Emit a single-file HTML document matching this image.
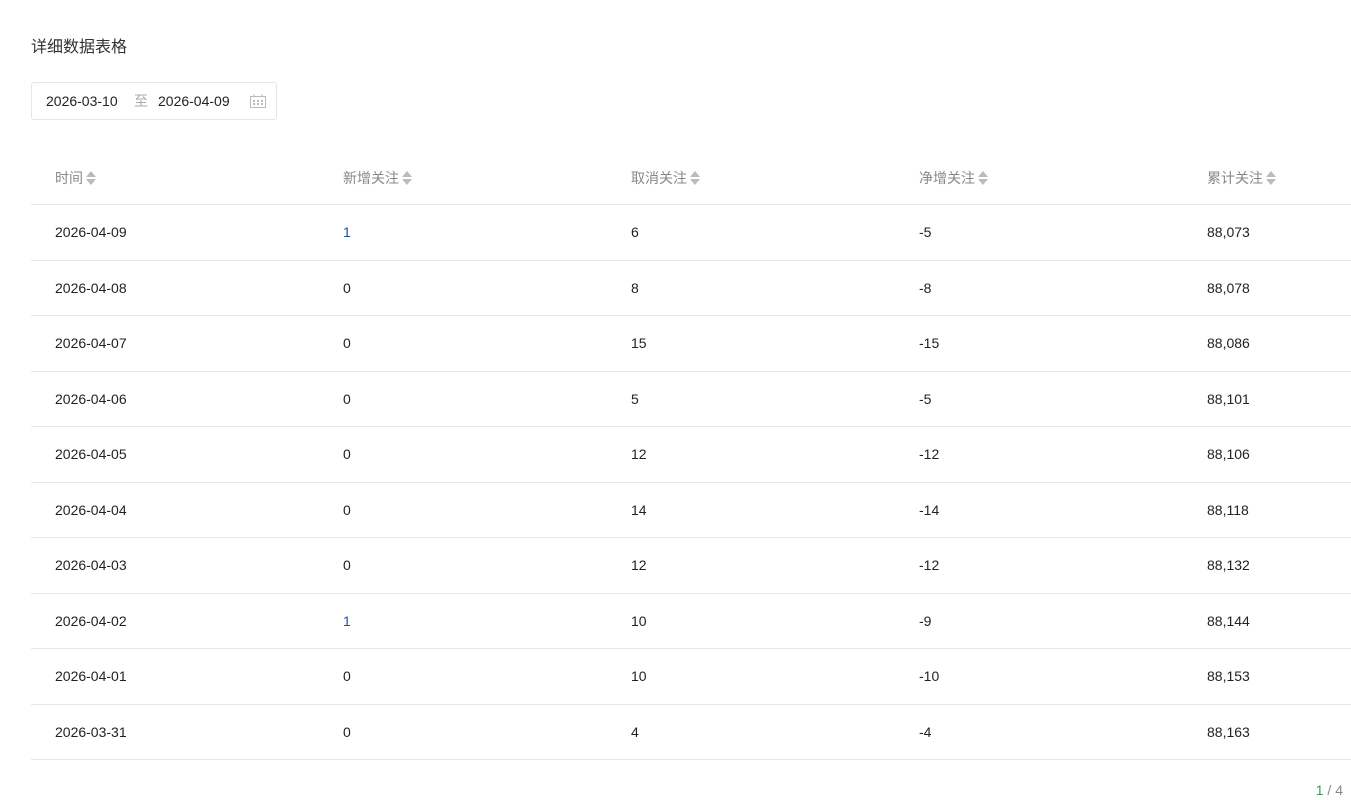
<!DOCTYPE html>
<html><head><meta charset="utf-8"><style>
*{margin:0;padding:0;box-sizing:border-box}
body{width:1351px;height:800px;background:#fff;font-family:"Liberation Sans","Noto Sans CJK SC",sans-serif;font-size:14px;color:#222;position:relative;overflow:hidden}
.title{position:absolute;left:31px;top:38px;font-size:16px;color:#333;line-height:20px}
.picker{position:absolute;left:31px;top:82px;width:246px;height:38px;border:1px solid #e4e6eb;border-radius:3px}
.picker span{position:absolute;top:9px;line-height:18px}
.tbl{position:absolute;left:31px;top:150px;width:1320px}
.row{height:55.5px;border-bottom:1px solid #e8e8e8;position:relative}
.hdr{height:55px;color:#888}
.row div{position:absolute;top:0;line-height:55px}
.hdr div{line-height:56px}
.c0{left:24px}.c1{left:312px}.c2{left:600px}.c3{left:888px}.c4{left:1176px}
.sort{display:inline-block;vertical-align:middle;margin-left:3px;margin-top:-3px}
.pg{position:absolute;right:8px;top:782px;color:#888;line-height:16px}
</style></head><body>
<div class="title">详细数据表格</div>
<div class="picker"><span style="left:14px">2026-03-10</span><span style="left:102px;color:#aaa">至</span><span style="left:126px">2026-04-09</span>
<svg style="position:absolute;left:218px;top:11px" width="16" height="14" viewBox="0 0 16 14" fill="none" stroke="#bbb"><rect x="0.5" y="2.5" width="15" height="11"/><line x1="4" y1="0" x2="4" y2="3"/><line x1="12" y1="0" x2="12" y2="3"/><g fill="#bbb" stroke="none"><rect x="3" y="6" width="2" height="2"/><rect x="7" y="6" width="2" height="2"/><rect x="11" y="6" width="2" height="2"/><rect x="3" y="9" width="2" height="2"/><rect x="7" y="9" width="2" height="2"/><rect x="11" y="9" width="2" height="2"/></g></svg></div>
<div class="tbl">
<div class="row hdr"><div class="c0">时间<svg class="sort" width="10" height="16"><path d="M5 1L10 7H0z M0 9H10L5 15z" fill="#bbb"/></svg></div><div class="c1">新增关注<svg class="sort" width="10" height="16"><path d="M5 1L10 7H0z M0 9H10L5 15z" fill="#bbb"/></svg></div><div class="c2">取消关注<svg class="sort" width="10" height="16"><path d="M5 1L10 7H0z M0 9H10L5 15z" fill="#bbb"/></svg></div><div class="c3">净增关注<svg class="sort" width="10" height="16"><path d="M5 1L10 7H0z M0 9H10L5 15z" fill="#bbb"/></svg></div><div class="c4">累计关注<svg class="sort" width="10" height="16"><path d="M5 1L10 7H0z M0 9H10L5 15z" fill="#bbb"/></svg></div></div>
<div class="row"><div class="c0">2026-04-09</div><div class="c1" style="color:#1a4fa0">1</div><div class="c2">6</div><div class="c3">-5</div><div class="c4">88,073</div></div>
<div class="row"><div class="c0">2026-04-08</div><div class="c1">0</div><div class="c2">8</div><div class="c3">-8</div><div class="c4">88,078</div></div>
<div class="row"><div class="c0">2026-04-07</div><div class="c1">0</div><div class="c2">15</div><div class="c3">-15</div><div class="c4">88,086</div></div>
<div class="row"><div class="c0">2026-04-06</div><div class="c1">0</div><div class="c2">5</div><div class="c3">-5</div><div class="c4">88,101</div></div>
<div class="row"><div class="c0">2026-04-05</div><div class="c1">0</div><div class="c2">12</div><div class="c3">-12</div><div class="c4">88,106</div></div>
<div class="row"><div class="c0">2026-04-04</div><div class="c1">0</div><div class="c2">14</div><div class="c3">-14</div><div class="c4">88,118</div></div>
<div class="row"><div class="c0">2026-04-03</div><div class="c1">0</div><div class="c2">12</div><div class="c3">-12</div><div class="c4">88,132</div></div>
<div class="row"><div class="c0">2026-04-02</div><div class="c1" style="color:#1a4fa0">1</div><div class="c2">10</div><div class="c3">-9</div><div class="c4">88,144</div></div>
<div class="row"><div class="c0">2026-04-01</div><div class="c1">0</div><div class="c2">10</div><div class="c3">-10</div><div class="c4">88,153</div></div>
<div class="row"><div class="c0">2026-03-31</div><div class="c1">0</div><div class="c2">4</div><div class="c3">-4</div><div class="c4">88,163</div></div>
</div>
<div class="pg"><span style="color:#3a9a5a">1</span> / 4</div>
</body></html>
